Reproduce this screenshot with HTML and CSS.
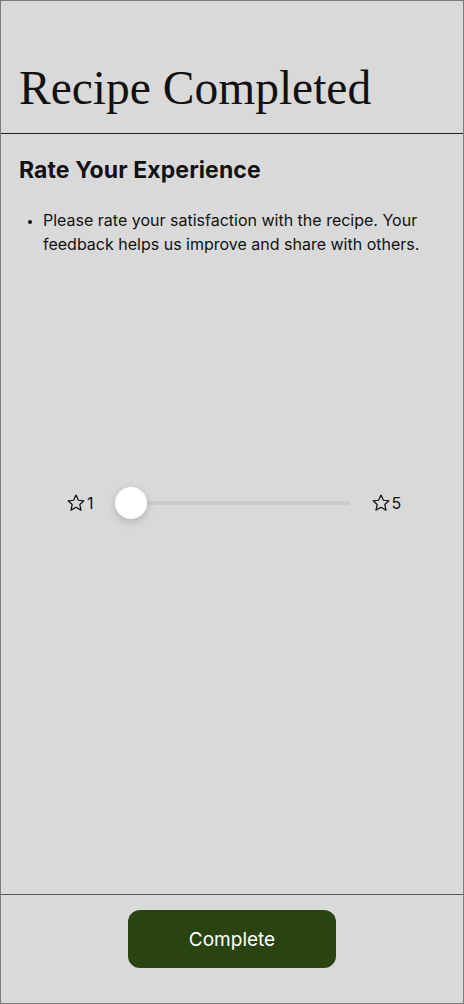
FILE: index.html
```html
<!DOCTYPE html>
<html>
<head>
  <meta charset="utf-8">
  <link rel="stylesheet" href="styles.css">
</head>
<body>
  <div class="screen">
    <div class="header">
      <h1 class="title">Recipe Completed</h1>
    </div>

    <div class="content">
      <h2 class="section-title">Rate Your Experience</h2>
      <ul class="notes">
        <li>Please rate your satisfaction with the recipe. Your feedback helps us improve and share with others.</li>
      </ul>

      <div class="rating">
        <div class="rating-label">
          <svg width="20" height="20" viewBox="0 0 24 24"><path d="M12 2.5l2.9 6.2 6.6.7-4.9 4.5 1.4 6.6L12 17.1l-6 3.4 1.4-6.6-4.9-4.5 6.6-.7z" fill="none" stroke="#111" stroke-width="1.5" stroke-linejoin="round"/></svg>
          <span>1</span>
        </div>
        <input type="range" class="rating-slider" min="1" max="5" value="1">
        <div class="rating-label">
          <svg width="20" height="20" viewBox="0 0 24 24"><path d="M12 2.5l2.9 6.2 6.6.7-4.9 4.5 1.4 6.6L12 17.1l-6 3.4 1.4-6.6-4.9-4.5 6.6-.7z" fill="none" stroke="#111" stroke-width="1.5" stroke-linejoin="round"/></svg>
          <span>5</span>
        </div>
      </div>
    </div>

    <div class="footer">
      <button class="complete-btn">Complete</button>
    </div>
  </div>
</body>
</html>
```

FILE: styles.css
```css
html, body {
  margin: 0;
  padding: 0;
}
body {
  width: 464px;
  height: 1004px;
  background-color: #d9d9d9;
  font-family: Inter, "Noto Sans", sans-serif;
  color: #111;
}
.screen {
  box-sizing: border-box;
  width: 464px;
  height: 1004px;
  border: 1px solid #7c7c7c;
  display: flex;
  flex-direction: column;
}
.header {
  padding: 58px 18px 16px;
  border-bottom: 1px solid #222;
}
.title {
  margin: 0;
  font-family: "Liberation Serif", "Times New Roman", serif;
  font-weight: normal;
  font-size: 47.5px;
  line-height: 58px;
  color: #111;
}
.content {
  flex: 1;
  padding: 22px 18px 0;
}
.section-title {
  margin: 0;
  font-size: 23px;
  font-weight: 700;
  line-height: 28px;
  letter-spacing: 0.1px;
}
.notes {
  margin: 24px 0 0;
  padding-left: 24px;
  font-size: 16px;
  line-height: 24px;
}
.notes li::marker {
  font-size: 12px;
}
.rating {
  display: flex;
  align-items: center;
  margin-top: 237px;
  padding-left: 47px;
}
.rating-label {
  display: flex;
  align-items: center;
  gap: 1px;
  font-size: 16px;
}
.rating-slider {
  width: 235px;
  height: 4px;
  margin: 0 21px 0 21px;
  border-radius: 2px;
  background: #cbcbcb;
  outline: none;
  -webkit-appearance: none;
  appearance: none;
}
.rating-slider::-webkit-slider-thumb {
  -webkit-appearance: none;
  appearance: none;
  width: 32px;
  height: 32px;
  border-radius: 50%;
  background: #fff;
  box-shadow: 0 3px 8px rgba(0,0,0,0.18);
  cursor: pointer;
}
.footer {
  border-top: 1px solid #555;
  padding: 15px 0 0;
  height: 109px;
  box-sizing: border-box;
  display: flex;
  justify-content: center;
}
.complete-btn {
  width: 208px;
  height: 58px;
  border: none;
  border-radius: 12px;
  background-color: #294410;
  color: #fff;
  font-family: Inter, "Noto Sans", sans-serif;
  font-size: 19px;
  cursor: pointer;
}
```
